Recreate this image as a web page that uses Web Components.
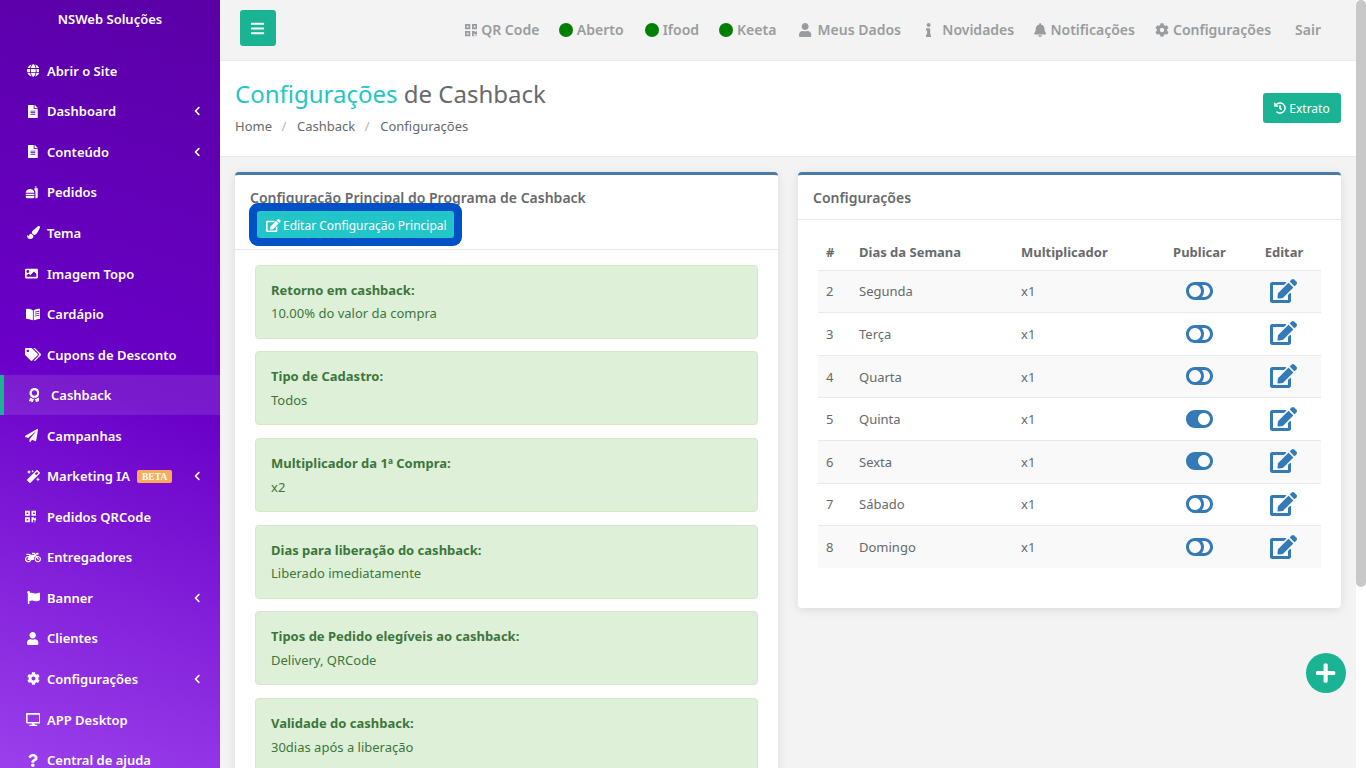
<!DOCTYPE html>
<html lang="pt-BR">
<head>
<meta charset="utf-8">
<title>Configurações de Cashback</title>
<style>
  html, body { margin: 0; height: 100%; overflow: hidden; background: #f3f3f3; font-family: "Noto Sans", sans-serif; }
</style>
</head>
<body>
<ns-app>
  <ns-sidebar slot="sidebar" brand="NSWeb Soluções">
    <ns-nav-item icon="globe">Abrir o Site</ns-nav-item>
    <ns-nav-item icon="file" arrow>Dashboard</ns-nav-item>
    <ns-nav-item icon="file" arrow>Conteúdo</ns-nav-item>
    <ns-nav-item icon="burger" flush>Pedidos</ns-nav-item>
    <ns-nav-item icon="brush">Tema</ns-nav-item>
    <ns-nav-item icon="image" flush>Imagem Topo</ns-nav-item>
    <ns-nav-item icon="book">Cardápio</ns-nav-item>
    <ns-nav-item icon="tags">Cupons de Desconto</ns-nav-item>
    <ns-nav-item icon="award" size="14.5" active>Cashback</ns-nav-item>
    <ns-nav-item icon="plane" flush>Campanhas</ns-nav-item>
    <ns-nav-item icon="magic" arrow>Marketing IA<ns-badge slot="badge">BETA</ns-badge></ns-nav-item>
    <ns-nav-item icon="qrcode" flush>Pedidos QRCode</ns-nav-item>
    <ns-nav-item icon="motorcycle">Entregadores</ns-nav-item>
    <ns-nav-item icon="flag" arrow>Banner</ns-nav-item>
    <ns-nav-item icon="user">Clientes</ns-nav-item>
    <ns-nav-item icon="cog" arrow>Configurações</ns-nav-item>
    <ns-nav-item icon="desktop">APP Desktop</ns-nav-item>
    <ns-nav-item icon="question">Central de ajuda</ns-nav-item>
  </ns-sidebar>

  <ns-topbar slot="main">
    <ns-top-link icon="qrcode" style="margin-right:-.5px">QR Code</ns-top-link>
    <ns-top-link dot style="margin-right:1px">Aberto</ns-top-link>
    <ns-top-link dot>Ifood</ns-top-link>
    <ns-top-link dot style="margin-right:3px">Keeta</ns-top-link>
    <ns-top-link icon="user" gap="6" style="margin-right:5px">Meus Dados</ns-top-link>
    <ns-top-link icon="info" gap="11">Novidades</ns-top-link>
    <ns-top-link icon="bell">Notificações</ns-top-link>
    <ns-top-link icon="cog" style="margin-right:4px">Configurações</ns-top-link>
    <ns-top-link>Sair</ns-top-link>
  </ns-topbar>

  <ns-page-head slot="main">
    <span slot="accent">Configurações</span>
    <span slot="title">de Cashback</span>
  </ns-page-head>

  <ns-content slot="main">
    <ns-card heading="Configuração Principal do Programa de Cashback">
      <ns-edit-button slot="actions">Editar Configuração Principal</ns-edit-button>
      <ns-alert label="Retorno em cashback:">10.00% do valor da compra</ns-alert>
      <ns-alert label="Tipo de Cadastro:">Todos</ns-alert>
      <ns-alert label="Multiplicador da 1ª Compra:">x2</ns-alert>
      <ns-alert label="Dias para liberação do cashback:">Liberado imediatamente</ns-alert>
      <ns-alert label="Tipos de Pedido elegíveis ao cashback:">Delivery, QRCode</ns-alert>
      <ns-alert label="Validade do cashback:">30dias após a liberação</ns-alert>
    </ns-card>
    <ns-card heading="Configurações" table>
      <ns-days-table></ns-days-table>
    </ns-card>
  </ns-content>

  <ns-fab slot="overlay"></ns-fab>
</ns-app>

<script>
// Font Awesome style glyphs: [viewBox width, path]
const ICONS = {
  globe: [496, "M336.5 160C322 70.7 287.8 8 248 8s-74 62.7-88.5 152h177zM152 256c0 22.2 1.2 43.5 3.3 64h185.3c2.1-20.5 3.3-41.8 3.3-64s-1.2-43.5-3.3-64H155.3c-2.1 20.5-3.3 41.8-3.3 64zm324.7-96c-28.6-67.9-86.5-120.4-158-141.6 24.4 33.8 41.2 84.7 50 141.6h108zM177.2 18.4C105.8 39.6 47.8 92.1 19.3 160h108c8.7-56.9 25.5-107.8 49.9-141.6zM487.4 192H372.7c2.1 21 3.3 42.5 3.3 64s-1.2 43-3.3 64h114.6c5.5-20.5 8.6-41.8 8.6-64s-3.1-43.5-8.5-64zM120 256c0-21.5 1.2-43 3.3-64H8.6C3.2 212.5 0 233.8 0 256s3.2 43.5 8.6 64h114.6c-2-21-3.2-42.5-3.2-64zm39.5 96c14.5 89.3 48.7 152 88.5 152s74-62.7 88.5-152h-177zm159.3 141.6c71.4-21.2 129.4-73.7 158-141.6h-108c-8.8 56.9-25.6 107.8-50 141.6zM19.3 352c28.6 67.9 86.5 120.4 158 141.6-24.4-33.8-41.2-84.7-50-141.6h-108z"],
  file: [384, "M224 136V0H24C10.7 0 0 10.7 0 24v464c0 13.3 10.7 24 24 24h336c13.3 0 24-10.7 24-24V160H248c-13.2 0-24-10.8-24-24zm64 236c0 6.6-5.4 12-12 12H108c-6.6 0-12-5.4-12-12v-8c0-6.6 5.4-12 12-12h168c6.6 0 12 5.4 12 12v8zm0-64c0 6.6-5.4 12-12 12H108c-6.6 0-12-5.4-12-12v-8c0-6.6 5.4-12 12-12h168c6.6 0 12 5.4 12 12v8zm0-72v8c0 6.6-5.4 12-12 12H108c-6.6 0-12-5.4-12-12v-8c0-6.6 5.4-12 12-12h168c6.6 0 12 5.4 12 12zm96-114.1v6.1H256V0h6.1c6.4 0 12.5 2.5 17 7l97.9 98c4.5 4.5 7 10.6 7 16.9z"],
  burger: [512, "M30 270C30 170 110 120 200 120s170 50 170 150zM30 305h340v50H30zM30 385h340v50q0 45-45 45H75q-45 0-45-45zM410 0h36v90h56v350q0 40-40 40h-60q10-20 10-45V270q0-90-60-150 30-30 58-30z"],
  brush: [512, "M167.02 309.34c-40.12 2.58-76.53 17.86-97.19 72.3-2.35 6.21-8 9.98-14.59 9.98-11.11 0-45.46-27.67-55.25-34.35C0 439.62 37.93 512 128 512c75.86 0 128-43.77 128-120.19 0-3.11-.65-6.08-.97-9.13l-88.01-73.34zM457.89 0c-15.16 0-29.37 6.71-40.21 16.45C213.27 199.05 192 203.34 192 257.09c0 13.7 3.25 26.76 8.73 38.7l63.82 53.18c7.21 1.8 14.64 3.03 22.39 3.03 62.11 0 98.11-45.47 211.16-256.46 7.38-14.35 13.9-29.85 13.9-45.99C512 20.64 486 0 457.89 0z"],
  image: [512, "M464 448H48c-26.51 0-48-21.49-48-48V112c0-26.51 21.49-48 48-48h416c26.51 0 48 21.49 48 48v288c0 26.51-21.49 48-48 48zM112 120c-30.928 0-56 25.072-56 56s25.072 56 56 56 56-25.072 56-56-25.072-56-56-56zM64 384h384V272l-87.515-87.515c-4.686-4.686-12.284-4.686-16.971 0L208 320l-55.515-55.515c-4.686-4.686-12.284-4.686-16.971 0L64 336v48z"],
  book: [576, "M542.22 32.05c-54.8 3.11-163.72 14.43-230.96 55.59-4.64 2.84-7.27 7.89-7.27 13.17v363.87c0 11.55 12.63 18.85 23.28 13.49 69.18-34.82 169.23-44.32 218.7-46.92 16.89-.89 30.02-14.43 30.02-30.66V62.75c.01-17.71-15.35-31.74-33.77-30.7zM264.73 87.64C197.5 46.48 88.58 35.17 33.78 32.05 15.36 31.01 0 45.04 0 62.75V400.6c0 16.24 13.13 29.78 30.02 30.66 49.49 2.6 149.59 12.11 218.77 46.95 10.62 5.35 23.21-1.94 23.21-13.46V100.63c0-5.29-2.62-10.38-7.27-12.99zM350 150L525 112v32L350 182zM350 226L525 188v32L350 258zM350 302L525 264v32L350 334z"],
  tags: [640, "M497.941 225.941L286.059 14.059A48 48 0 0 0 252.118 0H48C21.49 0 0 21.49 0 48v204.118a48 48 0 0 0 14.059 33.941l211.882 211.882c18.744 18.745 49.136 18.746 67.882 0l204.118-204.118c18.745-18.745 18.745-49.137 0-67.882zM112 160c-26.51 0-48-21.49-48-48s21.49-48 48-48 48 21.49 48 48-21.49 48-48 48zm513.941 133.823L421.823 497.941c-18.745 18.745-49.137 18.745-67.882 0l-.36-.36L527.64 323.522c16.999-16.999 26.36-39.6 26.36-63.64s-9.362-46.641-26.36-63.64L331.397 0h48.721a48 48 0 0 1 33.941 14.059l211.882 211.882c18.745 18.745 18.745 49.137 0 67.882z"],
  award: [384, "M97.12 362.63c-8.69-8.69-4.16-6.24-25.12-11.85-9.51-2.55-17.87-7.45-25.43-13.32L1.2 448.7c-4.39 10.77 3.81 22.47 15.43 22.03l52.69-2.01L105.56 507c8 8.44 22.04 5.81 26.43-4.96l52.05-127.62c-10.84 6.04-22.87 9.58-35.31 9.58-19.5 0-37.82-7.59-51.61-21.37zM382.8 448.7l-45.37-111.24c-7.56 5.88-15.92 10.77-25.43 13.32-21.07 5.64-16.45 3.18-25.12 11.85-13.79 13.78-32.12 21.37-51.62 21.37-12.44 0-24.47-3.55-35.31-9.58L252 502.04c4.39 10.77 18.44 13.4 26.43 4.96l36.25-38.28 52.69 2.01c11.62.44 19.82-11.27 15.43-22.03zM263 340c15.28-15.55 17.03-14.21 38.79-20.14 13.89-3.79 24.75-14.84 28.47-28.98 7.48-28.4 5.54-24.97 25.95-45.75 10.17-10.35 14.14-25.44 10.42-39.58-7.47-28.38-7.48-24.42 0-52.83 3.72-14.14-.25-29.23-10.42-39.58-20.41-20.78-18.47-17.36-25.95-45.75-3.72-14.14-14.58-25.19-28.47-28.98-27.88-7.61-24.52-5.62-44.95-26.41-10.17-10.35-25-14.4-38.89-10.61-27.87 7.6-23.98 7.61-51.9 0-13.89-3.79-28.72.25-38.89 10.61-20.41 20.78-17.05 18.8-44.94 26.41-13.89 3.79-24.75 14.84-28.47 28.98-7.47 28.39-5.54 24.97-25.95 45.75-10.17 10.35-14.15 25.44-10.42 39.58 7.47 28.36 7.48 24.4 0 52.82-3.72 14.14.25 29.23 10.42 39.59 20.41 20.78 18.47 17.35 25.95 45.75 3.72 14.14 14.58 25.19 28.47 28.98C104.6 325.96 106.27 325 121 340c13.23 13.47 33.84 15.88 49.74 5.82a39.676 39.676 0 0 1 42.53 0c15.89 10.06 36.5 7.65 49.73-5.82zM97.66 175.96c0-53.03 42.24-96.02 94.34-96.02s94.34 42.99 94.34 96.02-42.24 96.02-94.34 96.02-94.34-42.99-94.34-96.02z"],
  plane: [512, "M476 3.2L12.5 270.6c-18.1 10.4-15.8 35.6 2.2 43.2L121 358.4l287.3-253.2c5.5-4.9 13.3 2.6 8.6 8.3L176 407v80.5c0 23.6 28.5 32.9 42.5 15.8L282 426l124.6 52.2c14.2 6 30.4-2.9 33-18.2l72-432C515 7.8 493.3-6.8 476 3.2z"],
  magic: [512, "M224 96l16-32 32-16-32-16-16-32-16 32-32 16 32 16 16 32zM80 160l26.66-53.33L160 80l-53.34-26.67L80 0 53.34 53.33 0 80l53.34 26.67L80 160zm352 128l-26.66 53.33L352 368l53.34 26.67L432 448l26.66-53.33L512 368l-53.34-26.67L432 288zm70.62-193.77L417.77 9.38C411.53 3.12 403.34 0 395.15 0c-8.19 0-16.38 3.12-22.63 9.38L9.38 372.52c-12.5 12.5-12.5 32.76 0 45.25l84.85 84.85c6.25 6.25 14.44 9.37 22.62 9.37 8.19 0 16.38-3.12 22.63-9.37l363.14-363.15c12.5-12.48 12.5-32.75 0-45.24zM359.45 203.46l-50.91-50.91 86.6-86.6 50.91 50.91-86.6 86.6z"],
  qrcode: [448, "M0 224h192V32H0v192zM64 96h64v64H64V96zm192-64v192h192V32H256zm128 128h-64V96h64v64zM0 480h192V288H0v192zm64-128h64v64H64v-64zm352-64h32v128h-96v-32h-32v96h-64V288h96v32h64v-32zm0 160h32v32h-32v-32zm-64 0h32v32h-32v-32z"],
  motorcycle: [640, "M512.9 192c-14.9-.1-29.1 2.3-42.4 6.9L437.6 144H520c13.3 0 24-10.7 24-24V88c0-13.3-10.7-24-24-24h-45.3c-6.8 0-13.3 2.9-17.8 7.9l-37.5 41.7-22.8-38C392.2 68.4 384.4 64 376 64h-80c-8.8 0-16 7.2-16 16v16c0 8.8 7.2 16 16 16h66.4l19.2 32H227.9c-17.7-23.1-44.9-40-99.9-40H72.5C59 104 47.7 115 48 128.5c.2 13 10.9 23.5 24 23.5h56c24.5 0 38.7 10.9 47.8 24.8l-11.3 20.5c-13-3.9-26.9-5.7-41.3-5.2C55.9 194.5 1.6 249.6 0 317c-1.6 72.1 56.3 131 128 131 59.6 0 109.7-40.8 124-96h84.2c13.7 0 24.6-11.4 24-25.1-2.1-47.1 17.5-93.2 56.2-126.1l12.5 20.8c-27.6 23.7-45.1 58.9-44.8 98.2.5 69.6 57.2 126.5 126.8 127.1 71.6.7 129.8-57.5 129.2-129.1-.6-69.1-56.9-125.6-126.2-126.1zM128 400c-44.1 0-80-35.9-80-80s35.9-80 80-80c4.2 0 8.4.3 12.5 1L99 316.4c-8.8 16 2.8 35.6 21 35.6h81.3c-12.4 28.2-40.6 48-73.3 48zm384 0c-44.1 0-80-35.9-80-80 0-25.1 11.6-47.5 29.7-62.1l48.1 80.2c4.5 7.6 14.4 10 22 5.5l13.7-8.2c7.6-4.5 10-14.4 5.5-22l-46.7-77.9c2.4-.3 4.9-.5 7.7-.5 44.1 0 80 35.9 80 80s-35.9 85-80 85z"],
  flag: [512, "M349.565 98.783C295.978 98.783 251.721 64 184.348 64c-24.955 0-47.309 4.384-68.045 12.013a55.947 55.947 0 0 0 3.586-23.562C118.117 24.015 94.806 1.206 66.338.048 34.345-1.254 8 24.296 8 56c0 19.026 9.497 35.825 24 45.945V488c0 13.255 10.745 24 24 24h16c13.255 0 24-10.745 24-24v-94.4c28.311-12.064 63.582-22.122 114.435-22.122 53.588 0 97.844 34.783 165.217 34.783 48.169 0 86.667-16.294 122.505-40.858C506.84 359.452 512 349.571 512 339.045v-243.1c0-23.393-24.269-38.87-45.485-29.016-34.338 15.948-76.454 31.854-116.95 31.854z"],
  user: [448, "M224 256c70.7 0 128-57.3 128-128S294.7 0 224 0 96 57.3 96 128s57.3 128 128 128zm89.6 32h-16.7c-22.2 10.2-46.9 16-72.9 16s-50.6-5.8-72.9-16h-16.7C60.2 288 0 348.2 0 422.4V464c0 26.5 21.5 48 48 48h352c26.5 0 48-21.5 48-48v-41.6c0-74.2-60.2-134.4-134.4-134.4z"],
  cog: [512, "M487.4 315.7l-42.6-24.6c4.3-23.2 4.3-47 0-70.2l42.6-24.6c4.9-2.8 7.1-8.6 5.5-14-11.1-35.6-30-67.8-54.7-94.6-3.8-4.1-10-5.1-14.8-2.3L380.8 110c-17.9-15.4-38.5-27.3-60.8-35.1V25.8c0-5.6-3.9-10.5-9.4-11.7-36.7-8.2-74.3-7.8-109.2 0-5.5 1.2-9.4 6.1-9.4 11.7V75c-22.2 7.9-42.8 19.8-60.8 35.1L88.7 85.5c-4.9-2.8-11-1.9-14.8 2.3-24.7 26.7-43.6 58.9-54.7 94.6-1.7 5.4.6 11.2 5.5 14L67.3 221c-4.3 23.2-4.3 47 0 70.2l-42.6 24.6c-4.9 2.8-7.1 8.6-5.5 14 11.1 35.6 30 67.8 54.7 94.6 3.8 4.1 10 5.1 14.8 2.3l42.6-24.6c17.9 15.4 38.5 27.3 60.8 35.1v49.2c0 5.6 3.9 10.5 9.4 11.7 36.7 8.2 74.3 7.8 109.2 0 5.5-1.2 9.4-6.1 9.4-11.7v-49.2c22.2-7.9 42.8-19.8 60.8-35.1l42.6 24.6c4.9 2.8 11 1.9 14.8-2.3 24.7-26.7 43.6-58.9 54.7-94.6 1.5-5.5-.7-11.3-5.6-14.1zM256 336c-44.1 0-80-35.9-80-80s35.9-80 80-80 80 35.9 80 80-35.9 80-80 80z"],
  desktop: [576, "M528 0H48C21.5 0 0 21.5 0 48v320c0 26.5 21.5 48 48 48h192l-16 48h-72c-13.3 0-24 10.7-24 24s10.7 24 24 24h272c13.3 0 24-10.7 24-24s-10.7-24-24-24h-72l-16-48h192c26.5 0 48-21.5 48-48V48c0-26.5-21.5-48-48-48zm-16 352H64V64h448v288z"],
  question: [384, "M202.021 0C122.202 0 70.503 32.703 29.914 91.026c-7.363 10.58-5.093 25.086 5.178 32.874l43.138 32.709c10.373 7.865 25.132 6.026 33.253-4.148 25.049-31.381 43.63-49.449 82.757-49.449 30.764 0 68.816 19.799 68.816 49.631 0 22.552-18.617 34.134-48.993 51.164-35.423 19.86-82.299 44.576-82.299 106.405V320c0 13.255 10.745 24 24 24h72.471c13.255 0 24-10.745 24-24v-5.773c0-42.86 125.268-44.645 125.268-160.627C377.504 66.256 286.902 0 202.021 0zM192 373.459c-38.196 0-69.271 31.075-69.271 69.271 0 38.195 31.075 69.27 69.271 69.27s69.271-31.075 69.271-69.271-31.075-69.27-69.271-69.27z"],
  info: [192, "M20 424.229h20V279.771H20c-11.046 0-20-8.954-20-20V212c0-11.046 8.954-20 20-20h112c11.046 0 20 8.954 20 20v212.229h20c11.046 0 20 8.954 20 20V492c0 11.046-8.954 20-20 20H20c-11.046 0-20-8.954-20-20v-47.771c0-11.046 8.954-20 20-20zM96 0C56.235 0 24 32.235 24 72s32.235 72 72 72 72-32.235 72-72S135.764 0 96 0z"],
  bell: [448, "M224 512c35.32 0 63.97-28.65 63.97-64H160.03c0 35.35 28.65 64 63.97 64zm215.39-149.71c-19.32-20.76-55.47-51.99-55.47-154.29 0-77.7-54.48-139.9-127.94-155.16V32c0-17.67-14.32-32-31.98-32s-31.98 14.33-31.98 32v20.84C118.56 68.1 64.08 130.3 64.08 208c0 102.3-36.15 133.53-55.47 154.29-6 6.45-8.66 14.16-8.61 21.71.11 16.4 12.98 32 32.1 32h383.8c19.12 0 32-15.6 32.1-32 .05-7.55-2.61-15.27-8.61-21.71z"],
  angle: [320, "M34.52 239.03L228.87 44.69c9.37-9.37 24.57-9.37 33.94 0l22.67 22.67c9.36 9.36 9.37 24.52.04 33.9L131.49 256l154.02 154.75c9.34 9.38 9.32 24.54-.04 33.9l-22.67 22.67c-9.37 9.37-24.57 9.37-33.94 0L34.52 272.97c-9.37-9.37-9.37-24.57 0-33.94z"],
  bars: [448, "M16 132h416c8.837 0 16-7.163 16-16V76c0-8.837-7.163-16-16-16H16C7.163 60 0 67.163 0 76v40c0 8.837 7.163 16 16 16zm0 160h416c8.837 0 16-7.163 16-16v-40c0-8.837-7.163-16-16-16H16c-8.837 0-16 7.163-16 16v40c0 8.837 7.163 16 16 16zm0 160h416c8.837 0 16-7.163 16-16v-40c0-8.837-7.163-16-16-16H16c-8.837 0-16 7.163-16 16v40c0 8.837 7.163 16 16 16z"],
  plus: [448, "M416 208H272V64c0-17.67-14.33-32-32-32h-32c-17.67 0-32 14.33-32 32v144H32c-17.67 0-32 14.33-32 32v32c0 17.67 14.33 32 32 32h144v144c0 17.67 14.33 32 32 32h32c17.67 0 32-14.33 32-32V304h144c17.67 0 32-14.33 32-32v-32c0-17.67-14.33-32-32-32z"],
  edit: [576, "M402.6 83.2l90.2 90.2c3.8 3.8 3.8 10 0 13.8L274.4 405.6l-92.8 10.3c-12.4 1.4-22.9-9.1-21.5-21.5l10.3-92.8L388.8 83.2c3.8-3.8 10-3.8 13.8 0zm162-22.9l-48.8-48.8c-15.2-15.2-39.9-15.2-55.2 0l-35.4 35.4c-3.8 3.8-3.8 10 0 13.8l90.2 90.2c3.8 3.8 10 3.8 13.8 0l35.4-35.4c15.2-15.3 15.2-40 0-55.2zM384 346.2V448H64V128h229.8c3.2 0 6.2-1.3 8.5-3.5l40-40c7.6-7.6 2.2-20.5-8.5-20.5H48C21.5 64 0 85.5 0 112v352c0 26.5 21.5 48 48 48h352c26.5 0 48-21.5 48-48V306.2c0-10.7-12.9-16-20.5-8.5l-40 40c-2.2 2.3-3.5 5.3-3.5 8.5z"],
  history: [512, "M504 255.531c.253 136.64-111.18 248.372-247.82 248.468-59.015.042-113.223-20.53-155.822-54.911-11.077-8.94-11.905-25.541-1.839-35.607l11.267-11.267c8.609-8.609 22.353-9.551 31.891-1.984C173.062 425.135 212.781 440 256 440c101.705 0 184-82.311 184-184 0-101.705-82.311-184-184-184-48.814 0-93.149 18.969-126.068 49.932l50.754 50.754c10.08 10.08 2.941 27.314-11.313 27.314H24c-8.837 0-16-7.163-16-16V38.627c0-14.254 17.234-21.393 27.314-11.314l49.372 49.372C129.209 34.136 189.552 8 256 8c136.81 0 247.747 110.78 248 247.531zm-180.912 78.784l9.823-12.63c8.138-10.463 6.253-25.542-4.21-33.679L288 256.349V152c0-13.255-10.745-24-24-24h-16c-13.255 0-24 10.745-24 24v135.651l65.409 50.874c10.463 8.137 25.541 6.253 33.679-4.21z"],
  "toggle-off": [576, "M384 64H192C86 64 0 150 0 256s86 192 192 192h192c106 0 192-86 192-192S490 64 384 64zM64 256c0-70.8 57.3-128 128-128 70.8 0 128 57.3 128 128 0 70.8-57.3 128-128 128-70.8 0-128-57.3-128-128zm320 128h-48.9c65.2-72.8 65.2-183 0-256H384c70.8 0 128 57.3 128 128 0 70.8-57.3 128-128 128z"],
  "toggle-on": [576, "M384 64H192C86 64 0 150 0 256s86 192 192 192h192c106 0 192-86 192-192S490 64 384 64zm0 320c-70.8 0-128-57.3-128-128 0-70.8 57.3-128 128-128 70.8 0 128 57.3 128 128 0 70.8-57.3 128-128 128z"]
};

// small helper so every class does not repeat the attachShadow lines
class Base extends HTMLElement {
  render(html) {
    this.attachShadow({ mode: "open" });
    this.shadowRoot.innerHTML = html;
  }
}

class NsIcon extends Base {
  connectedCallback() {
    const [w, d] = ICONS[this.getAttribute("name")];
    const size = Number(this.getAttribute("size") || 13);
    this.render(`
      <style>
        :host { display: inline-flex; flex: none; align-items: center; justify-content: center; }
        svg { display: block; fill: currentColor; }
      </style>
      <svg width="${(w / 512) * size}" height="${size}" viewBox="0 0 ${w} 512"><path d="${d}"/></svg>`);
  }
}

class NsApp extends Base {
  connectedCallback() {
    this.render(`
      <style>
        :host { display: flex; height: 768px; overflow: hidden; position: relative; color: #676a6c; font: 13px "Noto Sans", sans-serif; }
        .sidebar { flex: none; width: 220px; display: flex; }
        .main { flex: 1; min-width: 0; display: flex; flex-direction: column; overflow: hidden; }
        .track { flex: none; width: 10px; background: #fff; }
        .thumb { height: 587px; background: #c8c8c8; border-radius: 5px; }
      </style>
      <div class="sidebar"><slot name="sidebar"></slot></div>
      <div class="main"><slot name="main"></slot></div>
      <div class="track"><div class="thumb"></div></div>
      <slot name="overlay"></slot>`);
  }
}

class NsSidebar extends Base {
  connectedCallback() {
    this.render(`
      <style>
        :host { display: block; width: 220px; height: 768px; overflow: hidden; color: #fff;
          background: linear-gradient(198deg, #5a00a6 0%, #6a00c8 50%, #9b40ec 100%); }
        .brand { text-align: center; font-size: 13px; font-weight: 600; line-height: 18px; padding-top: 10px; height: 50.5px; box-sizing: border-box; }
      </style>
      <div class="brand">${this.getAttribute("brand")}</div>
      <nav><slot></slot></nav>`);
  }
}

class NsNavItem extends Base {
  connectedCallback() {
    const arrow = this.hasAttribute("arrow")
      ? `<ns-icon class="arrow" name="angle" size="10"></ns-icon>` : "";
    this.render(`
      <style>
        :host { display: flex; align-items: center; box-sizing: border-box; height: 40.55px; padding: 0 20px 0 25px; font-size: 13px; font-weight: 600; color: #fff; white-space: nowrap; }
        :host([active]) { background: rgba(255,255,255,.1); border-left: 4px solid #1ab394; }
        .ico { width: 16px; margin-right: 6px; }
        :host([flush]) .ico { justify-content: flex-start; }
        :host([active]) .ico { margin-left: -3px; margin-right: 9px; }
        .arrow { margin-left: auto; }
      </style>
      <ns-icon class="ico" name="${this.getAttribute("icon")}" size="${this.getAttribute("size") || 13}"></ns-icon>
      <slot></slot>
      <slot name="badge"></slot>
      ${arrow}`);
  }
}

class NsBadge extends Base {
  connectedCallback() {
    this.render(`
      <style>
        :host { display: inline-block; margin-left: 7px; padding: 0 5px; height: 13px; border-radius: 2px; background: #f8ac59; color: #fff; font: bold 9.5px/14px "Liberation Serif", serif; letter-spacing: .1px; }
      </style>
      <slot></slot>`);
  }
}

class NsTopbar extends Base {
  connectedCallback() {
    this.render(`
      <style>
        :host { display: flex; flex: none; align-items: center; box-sizing: border-box; height: 61px; padding: 0 25px 0 20px; background: #f3f3f3; border-bottom: 1px solid #e7eaec; }
        button { width: 36px; height: 36px; margin-bottom: 4px; border: 0; padding: 0; border-radius: 3px; background: #1ab394; color: #fff; display: flex; align-items: center; justify-content: center; }
        .links { margin-left: auto; margin-bottom: 1px; display: flex; align-items: center; }
      </style>
      <button aria-label="Menu"><ns-icon name="bars" size="15"></ns-icon></button>
      <div class="links"><slot></slot></div>`);
  }
}

class NsTopLink extends Base {
  connectedCallback() {
    const icon = this.getAttribute("icon");
    const gap = this.getAttribute("gap") || 4;
    const lead = this.hasAttribute("dot")
      ? `<span class="dot"></span>`
      : icon ? `<ns-icon style="margin-right:${gap}px" name="${icon}" size="14"></ns-icon>` : "";
    this.render(`
      <style>
        :host { display: inline-flex; align-items: center; padding: 0 10px; font-size: 14px; font-weight: 600; color: #999c9e; white-space: nowrap; }
        .dot { width: 14px; height: 14px; border-radius: 50%; background: #008000; margin-right: 4px; }
      </style>
      ${lead}<slot></slot>`);
  }
}

class NsPageHead extends Base {
  connectedCallback() {
    this.render(`
      <style>
        :host { display: flex; flex: none; justify-content: space-between; align-items: flex-start; box-sizing: border-box; height: 96px; padding: 16px 15px 0; background: #fff; border-bottom: 1px solid #e7eaec; }
        h2 { margin: 0 0 5px; font-size: 24px; font-weight: 400; line-height: 34px; color: #676a6c; }
        .accent { color: #23c6c8; }
        ol { list-style: none; display: flex; margin: 0; padding: 0; font-size: 13px; line-height: 20px; color: #676a6c; }
        li + li::before { content: "/"; color: #b5b5b5; display: inline-block; width: 25px; text-align: center; padding-right: 1px; box-sizing: border-box; }
        button { display: flex; align-items: center; gap: 3px; height: 30px; width: 78px; justify-content: center; margin-top: 16px; border: 0; border-radius: 3px; background: #1ab394; color: #fff; font: 12px "Noto Sans", sans-serif; padding: 0; }
      </style>
      <div>
        <h2><span class="accent"><slot name="accent"></slot></span> <slot name="title"></slot></h2>
        <ol><li>Home</li><li>Cashback</li><li>Configurações</li></ol>
      </div>
      <button><ns-icon name="history" size="12"></ns-icon>Extrato</button>`);
  }
}

class NsContent extends Base {
  connectedCallback() {
    this.render(`
      <style>
        :host { display: grid; grid-template-columns: 543px 543px; column-gap: 20px; align-items: start; padding: 15px 15px 0; background: #f3f3f3; }
      </style>
      <slot></slot>`);
  }
}

class NsCard extends Base {
  connectedCallback() {
    this.render(`
      <style>
        :host { display: block; background: #fff; border-top: 3px solid #4a7ba6; border-radius: 4px; box-shadow: 0 2px 10px rgba(0,0,0,.1); }
        header { padding: 13px 15px 11px; border-bottom: 1px solid #e7eaec; }
        h5 { margin: 0; font-size: 14px; font-weight: 600; line-height: 20px; color: #676a6c; }
        .body { padding: 14.8px 20px 20px; }
        :host([table]) .body { padding-top: 14.1px; }
      </style>
      <header>
        <h5>${this.getAttribute("heading")}</h5>
        <slot name="actions"></slot>
      </header>
      <div class="body"><slot></slot></div>`);
  }
}

class NsEditButton extends Base {
  connectedCallback() {
    this.render(`
      <style>
        :host { display: flex; align-items: center; justify-content: center; gap: 2px; position: relative; box-sizing: border-box; width: 197px; height: 27px; margin: 3px 0 0 7px; padding: 1px 0 0 2px; border-radius: 3px; background: #23c6c8; color: #fff; font-size: 12px; white-space: nowrap; box-shadow: 0 0 0 8px #0050c8; }
      </style>
      <ns-icon name="edit" size="13"></ns-icon><slot></slot>`);
  }
}

class NsAlert extends Base {
  connectedCallback() {
    this.render(`
      <style>
        :host { display: block; box-sizing: border-box; height: 74px; margin-bottom: 12.67px; padding: 13.7px 15px 0; background: #dff0d8; border: 1px solid #d6e9c6; border-radius: 4px; color: #3c763d; font-size: 13px; line-height: 22.5px; }
        strong { display: block; margin: -.75px 0 1.05px; font-weight: 700; }
      </style>
      <strong>${this.getAttribute("label")}</strong>
      <slot></slot>`);
  }
}

class NsDaysTable extends Base {
  connectedCallback() {
    const days = [
      [2, "Segunda", false], [3, "Terça", false], [4, "Quarta", false], [5, "Quinta", true],
      [6, "Sexta", true], [7, "Sábado", false], [8, "Domingo", false]
    ];
    const rows = days.map(([n, name, on]) => `
      <tr>
        <td>${n}</td><td>${name}</td><td>x1</td>
        <td class="c"><ns-icon class="sw" name="toggle-${on ? "on" : "off"}" size="24"></ns-icon></td>
        <td class="c"><ns-icon class="pen" name="edit" size="24"></ns-icon></td>
      </tr>`).join("");
    this.render(`
      <style>
        :host { display: block; padding-bottom: 20px; color: #676a6c; }
        table { width: 503px; border-collapse: collapse; table-layout: fixed; font-size: 13px; }
        th { height: 36px; padding: 0 8px; text-align: left; font-weight: 700; box-sizing: border-box; }
        td { height: 42.6px; padding: 0 8px; box-sizing: border-box; border-top: 1px solid #e7eaec; }
        tr:nth-child(odd) td { background: #f9f9f9; }
        .c { text-align: center; color: #337ab7; padding: 0; }
        th.c { color: #676a6c; }
        ns-icon { vertical-align: middle; }
        .sw { margin-bottom: .8px; }
        .pen { margin-left: -1px; margin-top: -1px; margin-bottom: .3px; }
      </style>
      <table>
        <colgroup><col style="width:33px"><col style="width:162px"><col style="width:139px"><col style="width:95px"><col style="width:74px"></colgroup>
        <thead><tr><th>#</th><th>Dias da Semana</th><th>Multiplicador</th><th class="c">Publicar</th><th class="c">Editar</th></tr></thead>
        <tbody>${rows}</tbody>
      </table>`);
  }
}

class NsFab extends Base {
  connectedCallback() {
    this.render(`
      <style>
        :host { position: absolute; left: 1306px; top: 653px; width: 40px; height: 40px; border-radius: 50%; background: #1ab394; color: #fff; display: flex; align-items: center; justify-content: center; }
      </style>
      <ns-icon name="plus" size="22"></ns-icon>`);
  }
}

customElements.define("ns-icon", NsIcon);
customElements.define("ns-app", NsApp);
customElements.define("ns-sidebar", NsSidebar);
customElements.define("ns-nav-item", NsNavItem);
customElements.define("ns-badge", NsBadge);
customElements.define("ns-topbar", NsTopbar);
customElements.define("ns-top-link", NsTopLink);
customElements.define("ns-page-head", NsPageHead);
customElements.define("ns-content", NsContent);
customElements.define("ns-card", NsCard);
customElements.define("ns-edit-button", NsEditButton);
customElements.define("ns-alert", NsAlert);
customElements.define("ns-days-table", NsDaysTable);
customElements.define("ns-fab", NsFab);
</script>
</body>
</html>
